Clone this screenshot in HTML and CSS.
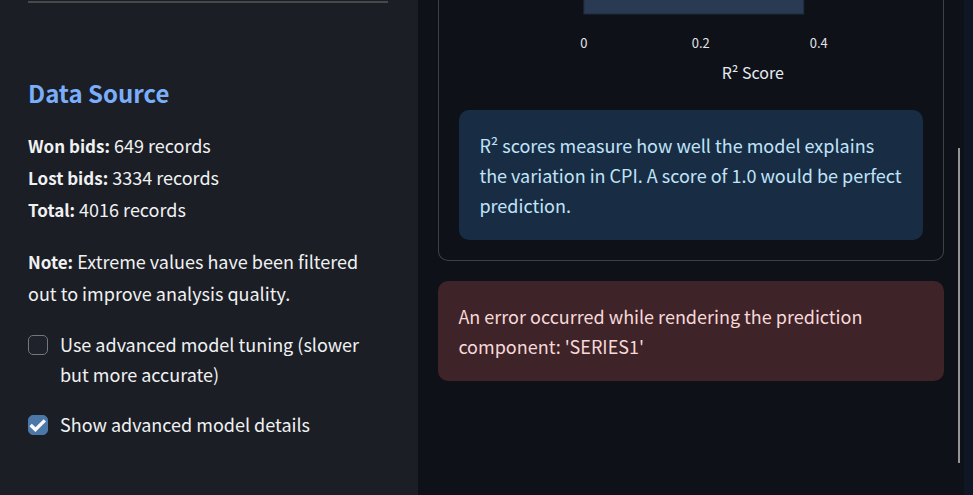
FILE: index.html
```html
<!DOCTYPE html>
<html lang="en">
<head>
<meta charset="utf-8">
<title>Model Performance</title>
<link rel="stylesheet" href="styles.css">
</head>
<body>
<div class="app">
  <aside class="sidebar">
    <hr class="divider">
    <h2 class="heading">Data Source</h2>
    <p class="copy"><strong>Won bids:</strong> 649 records<br><strong>Lost bids:</strong> 3334 records<br><strong>Total:</strong> 4016 records</p>
    <p class="copy"><strong>Note:</strong> Extreme values have been filtered out to improve analysis quality.</p>
    <div class="options">
      <label class="option" for="tuning">
        <span class="check">
          <input type="checkbox" id="tuning">
          <svg class="tick" viewBox="0 0 20 20" aria-hidden="true"><path d="M2.6 10 7.4 14.6 16.8 5.4"/></svg>
        </span>
        <span>Use advanced model tuning (slower but more accurate)</span>
      </label>
      <label class="option" for="details">
        <span class="check">
          <input type="checkbox" id="details" checked>
          <svg class="tick" viewBox="0 0 20 20" aria-hidden="true"><path d="M2.6 10 7.4 14.6 16.8 5.4"/></svg>
        </span>
        <span>Show advanced model details</span>
      </label>
    </div>
  </aside>
  <main class="content">
    <section class="card">
      <svg class="chart" viewBox="0 0 464 90" role="img" aria-label="R² Score">
        <rect class="bar" x="125" y="-10" width="220" height="24"/>
        <g class="ticks">
          <text x="125" y="48">0</text>
          <text x="242" y="48">0.2</text>
          <text x="360" y="48">0.4</text>
        </g>
        <text class="axis-title" x="294" y="79">R² Score</text>
      </svg>
      <div class="alert info">R² scores measure how well the model explains the variation in CPI. A score of 1.0 would be perfect prediction.</div>
    </section>
    <div class="alert error" role="alert">An error occurred while rendering the prediction component: 'SERIES1'</div>
  </main>
  <div class="scrollbar"><div class="thumb"></div></div>
  <div class="edge"></div>
</div>
</body>
</html>
```

FILE: styles.css
```css
* {
  box-sizing: border-box;
}

body {
  margin: 0;
  background: #0e1117;
  color: #f0f1f2;
  font-family: "Source Sans Pro", "Noto Sans CJK SC", sans-serif;
  font-size: 18px;
  line-height: 30px;
}

.app {
  display: flex;
  min-height: 100vh;
}

.sidebar {
  flex: 0 0 43%;
  padding: 1px 30px 20px 28px;
  background: #1b1e25;
}

.divider {
  height: 2px;
  margin: 0;
  border: 0;
  background: #48494d;
}

.heading {
  margin: 72px 0 18px;
  color: #7aaefa;
  font-size: 24px;
  font-weight: 700;
  line-height: 36px;
}

.copy {
  margin: 0 0 20px;
  line-height: 32px;
}

.copy strong {
  font-size: 17px;
  line-height: 20px;
}

.options {
  display: flex;
  flex-direction: column;
  gap: 20px;
}

.option {
  display: flex;
  gap: 12px;
}

.check {
  display: grid;
  flex: none;
  width: 20px;
  height: 20px;
  margin-top: 6px;
}

.check > * {
  grid-area: 1 / 1;
}

.check input {
  width: 20px;
  height: 20px;
  margin: 0;
  border: 1px solid #74767b;
  border-radius: 5px;
  appearance: none;
  background: #1f222a;
}

.check input:checked {
  border-color: #4b78a8;
  background: #4b78a8;
}

.tick {
  width: 20px;
  height: 20px;
  fill: none;
  stroke: #fafafa;
  stroke-width: 3.4;
  visibility: hidden;
}

input:checked + .tick {
  visibility: visible;
}

.content {
  display: flex;
  flex: 1;
  flex-direction: column;
  gap: 20px;
  min-width: 0;
  padding: 0 14px 20px 20px;
}

.card {
  padding: 0 20px 20px;
  border: 1px solid #3e4044;
  border-top: 0;
  border-radius: 0 0 10px 10px;
}

.chart {
  display: block;
  width: 100%;
  margin-bottom: 20px;
}

.bar {
  fill: #293a52;
  stroke: #1f2d41;
}

.chart text {
  fill: #e2e4e8;
  font-size: 13px;
  text-anchor: middle;
}

.chart .axis-title {
  fill: #e6eaf1;
  font-size: 16px;
}

.alert {
  padding: 20px;
  border-radius: 10px;
}

.info {
  background: #182d43;
  color: #c0e3fa;
}

.error {
  background: #3e2328;
  color: #f7d9d9;
}

.scrollbar {
  flex: 0 0 2px;
  padding: 148px 0 32px;
  margin-right: 4px;
  display: flex;
}

.thumb {
  flex: 1;
  background: #949494;
}

.edge {
  flex: 0 0 9px;
  background: #0f1626;
}
```
